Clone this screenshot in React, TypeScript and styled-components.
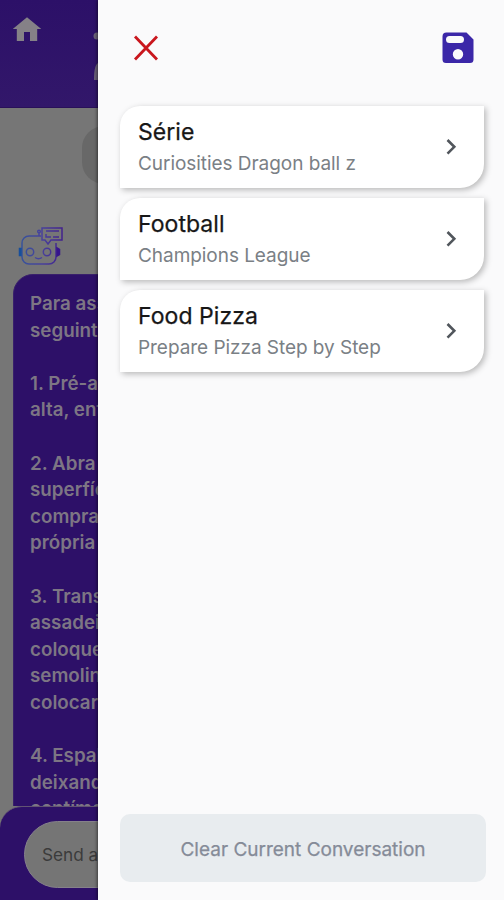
import React from "react";
import styled, { createGlobalStyle } from "styled-components";

const GlobalStyle = createGlobalStyle`
  * { box-sizing: border-box; }
  body { margin: 0; overflow: hidden; font-family: Inter, sans-serif; }
  button { font: inherit; border: 0; padding: 0; background: none; }
`;

const Screen = styled.div`
  position: relative;
  width: 504px;
  height: 900px;
  overflow: hidden;
  background: #767676;
`;

const ChatPage = styled.div`
  display: flex;
  flex-direction: column;
  width: 504px;
  height: 900px;
`;

const Header = styled.header`
  display: flex;
  align-items: flex-start;
  flex: none;
  height: 108px;
  padding: 12px 0 0 9px;
  background: linear-gradient(#2c1068, #32176a);
  border-bottom: 1px solid #291059;
`;

const HeaderMarks = styled.svg`
  margin-left: 48px;
  margin-top: 12px;
`;

const Messages = styled.main`
  flex: none;
  height: 698px;
  overflow: hidden;
`;

const UserBubble = styled.div`
  width: 380px;
  height: 58px;
  margin: 18px 0 0 82px;
  border-radius: 22px;
  background: #686868;
`;

const BotIcon = styled.svg`
  display: block;
  margin: 43px 0 0 17px;
`;

const BotBubble = styled.div`
  width: 450px;
  height: 620px;
  margin: 5px 0 0 13px;
  padding: 16px 0 0 16px;
  border: 1px solid #39206b;
  border-radius: 20px;
  background: #2d1068;
  color: #7d7684;
  font-size: 18.8px;
  font-weight: 600;
  line-height: 26.6px;
  white-space: pre;
`;

const Composer = styled.footer`
  flex: none;
  height: 94px;
  padding: 14px 24px;
  border-top: 1px solid #625473;
  border-radius: 22px 22px 0 0;
  background: #2d1068;
`;

const MessageInput = styled.div`
  display: flex;
  align-items: center;
  height: 67px;
  padding-left: 17px;
  border: 1px solid #85818a;
  border-radius: 34px;
  background: #757575;
  color: #3b3b3b;
  font-size: 17.2px;
`;

const Drawer = styled.aside`
  position: absolute;
  inset: 0 0 0 98px;
  display: flex;
  flex-direction: column;
  padding: 31px 18px 18px 22px;
  background: #fafafb;
  box-shadow: -1px 0 3px rgba(0, 0, 0, 0.5);
`;

const DrawerBar = styled.div`
  display: flex;
  justify-content: space-between;
  height: 75px;
  padding: 0 12px 0 13px;
`;

const IconButton = styled.button`
  display: flex;
  align-items: flex-start;
  height: 34px;
`;

const ConversationList = styled.div`
  display: flex;
  flex-direction: column;
  gap: 10px;
  padding-right: 2px;
`;

const Card = styled.button`
  display: flex;
  align-items: center;
  justify-content: space-between;
  height: 82px;
  padding: 0 24px 0 18px;
  border-radius: 20px 0 24px 0;
  background: #fff;
  box-shadow: 2px 2px 6px rgba(0, 0, 0, 0.27);
  text-align: left;
`;

const CardText = styled.div`
  display: flex;
  flex-direction: column;
`;

const CardTitle = styled.span`
  color: #171717;
  font-size: 23px;
  line-height: 32px;
  letter-spacing: 0.05px;
  -webkit-text-stroke: 0.25px #171717;
`;

const CardSubtitle = styled.span`
  color: #7a8085;
  font-size: 19px;
  line-height: 31px;
  letter-spacing: -0.05px;
`;

const ClearButton = styled.button`
  height: 68px;
  margin-top: auto;
  padding-top: 3px;
  border-radius: 10px;
  background: #e8ecef;
  color: #858b98;
  font-size: 19px;
  -webkit-text-stroke: 0.25px #858b98;
`;

const conversations = [
  { title: "Série", subtitle: "Curiosities Dragon ball z" },
  { title: "Football", subtitle: "Champions League" },
  { title: "Food Pizza", subtitle: "Prepare Pizza Step by Step" },
];

const recipe = `Para assar uma pizza, siga as
seguintes etapas:

1. Pré-aqueça o forno na potência
alta, entre 220 e 250 graus.

2. Abra a massa sobre uma
superfície enfarinhada. Pode ser
comprada pronta ou feita na sua
própria casa.

3. Transfira a massa para uma
assadeira ou pedra de pizza e
coloque um pouco de farinha ou
semolina por baixo antes de
colocar a massa.

4. Espalhe o molho de tomate,
deixando uma borda de dois
centímetros.`;

const HomeIcon = () => (
  <svg width="36" height="36" viewBox="0 0 24 24" fill="#858187">
    <path d="M10 19.4v-6h4v6h4.8v-8h2.7L12 3.5 2.5 11.4h2.7v8z" />
  </svg>
);

const RobotIcon = () => (
  <BotIcon width="49" height="42" viewBox="0 0 49 42" fill="none" stroke="url(#robot)" strokeWidth="1.5">
    <defs>
      <linearGradient id="robot" x1="0" y1="0" x2="46" y2="0" gradientUnits="userSpaceOnUse">
        <stop stopColor="#34579a" />
        <stop offset="0.55" stopColor="#48409b" />
        <stop offset="1" stopColor="#42208c" />
      </linearGradient>
    </defs>
    <path d="M24 9H12a7 7 0 0 0-7 7v14a7 7 0 0 0 7 7h20a7 7 0 0 0 7-7V16M22 9V5" />
    <circle cx="22" cy="4.5" r="1.3" />
    <path d="M25 1h20v12H34l-3 4-3-4h-3zM29 4h13M29 7v3h5m2 0h6" />
    <circle cx="13" cy="25" r="3.7" />
    <circle cx="30" cy="25" r="3.7" />
    <path d="M18 30.5q3.5 2.5 7 0" />
    <path d="M4 21.5H2.5v7H4z" fill="#174f9c" stroke="#174f9c" />
    <path d="M40 21l2.5 1.5v5L40 29z" fill="#36158d" stroke="#36158d" />
  </BotIcon>
);

const CloseIcon = () => (
  <svg width="26" height="34" viewBox="0 0 26 34" stroke="#c9161d" strokeWidth="2.8" fill="none">
    <path d="M2 5.5l22 23M24 5.5l-22 23" />
  </svg>
);

const SaveIcon = () => (
  <svg width="32" height="34" viewBox="0 0 32 34">
    <path
      fill="#3b27a8"
      fillRule="evenodd"
      d="M4.5 1.5h20l7 7v20a3.5 3.5 0 0 1-3.5 3.5H4a3.5 3.5 0 0 1-3.5-3.5v-23a4 4 0 0 1 4-4zM7.5 5a3.5 3.5 0 0 0 0 7h11a3.5 3.5 0 0 0 0-7zM16 18.1a5.2 5.2 0 1 0 0 10.4 5.2 5.2 0 0 0 0-10.4z"
    />
  </svg>
);

const Chevron = () => (
  <svg width="16" height="20" viewBox="0 0 16 20" fill="none" stroke="#51565c" strokeWidth="2.6">
    <path d="M3.5 3l6.8 6.8-6.8 6.8" />
  </svg>
);

export default function App() {
  return (
    <Screen>
      <GlobalStyle />
      <ChatPage>
        <Header>
          <HomeIcon />
          <HeaderMarks width="20" height="60" viewBox="0 0 20 60" fill="#6b6278">
            <circle cx="4" cy="12" r="3.5" />
            <path d="M1 56c0-10 1-18 7-18v18z" />
          </HeaderMarks>
        </Header>
        <Messages>
          <UserBubble />
          <RobotIcon />
          <BotBubble>{recipe}</BotBubble>
        </Messages>
        <Composer>
          <MessageInput>Send a message</MessageInput>
        </Composer>
      </ChatPage>
      <Drawer>
        <DrawerBar>
          <IconButton aria-label="Close"><CloseIcon /></IconButton>
          <IconButton aria-label="Save"><SaveIcon /></IconButton>
        </DrawerBar>
        <ConversationList>
          {conversations.map((item) => (
            <Card key={item.title}>
              <CardText>
                <CardTitle>{item.title}</CardTitle>
                <CardSubtitle>{item.subtitle}</CardSubtitle>
              </CardText>
              <Chevron />
            </Card>
          ))}
        </ConversationList>
        <ClearButton>Clear Current Conversation</ClearButton>
      </Drawer>
    </Screen>
  );
}
